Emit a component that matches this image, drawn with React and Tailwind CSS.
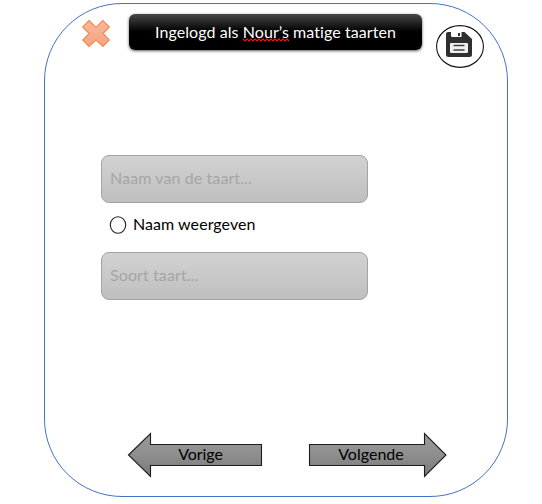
function CloseIcon() {
  return (
    <svg className="block h-7 w-7" viewBox="0 0 28 28">
      <defs>
        <linearGradient id="close" x1="0" y1="0" x2="0" y2="1">
          <stop offset="0" stopColor="#f7b89d" />
          <stop offset="1" stopColor="#f5a482" />
        </linearGradient>
      </defs>
      <path
        d="M7 .5 14 7.3 20.9.5 27.3 7.1 21 13.5 27.3 20 20.9 26.4 14 19.8 7 26.4.7 20 7.2 13.5.7 7.1Z"
        fill="url(#close)"
        stroke="#f08a45"
        strokeWidth="1.1"
      />
    </svg>
  );
}

function SaveIcon() {
  return (
    <svg className="block h-[43px] w-[48px]" viewBox="0 0 48 43">
      <ellipse cx="24" cy="21.5" rx="23.4" ry="20.9" fill="#fff" stroke="#111" strokeWidth="1.1" />
      <path d="M12 7h16.5L36 14v15.5Q36 32 33.500 32h-21Q10 32 10 29.500V9q0-2 2-2Z" fill="#303030" />
      <path d="M15 6.500h10.500v5.500h-9q-1.500 0-1.500-1.500Z" fill="#fff" />
      <path d="M22 8h2v3h-2Z" fill="#303030" />
      <rect x="14" y="18" width="18" height="10" rx="1" fill="#f0f0f0" />
      <path d="M17.500 20.500h11M17.500 25h11" stroke="#404040" strokeWidth="1.300" />
    </svg>
  );
}

function ArrowButton({ label, direction }) {
  const left = direction === "left";
  const id = left ? "arrowLeft" : "arrowRight";
  return (
    <button
      className={
        left
          ? "grid h-[46px] w-[136px] place-items-center"
          : "grid h-[46px] w-[139px] place-items-center"
      }
    >
      <svg
        className="col-start-1 row-start-1 block h-full w-full"
        viewBox={left ? "0 0 136 46" : "0 0 139 46"}
      >
        <defs>
          <linearGradient id={id} x1="0" y1="0" x2="0" y2="1">
            <stop offset="0" stopColor="#9b9b9b" />
            <stop offset="0.5" stopColor="#8e8e8e" />
            <stop offset="1" stopColor="#797979" />
          </linearGradient>
        </defs>
        <path
          d={
            left
              ? "M1.500 23 23.500 1.500V12.500H134.500V33.500H23.500V44.500Z"
              : "M1.500 12.500H116.500V1.500L138 23 116.500 44.500V33.500H1.500Z"
          }
          fill={`url(#${id})`}
          stroke="#1c1c1c"
          strokeWidth="1.100"
        />
      </svg>
      <span
        className={
          left
            ? "col-start-1 row-start-1 mb-[2px] ml-[11px] text-[16px] leading-5 tracking-[-0.05px]"
            : "col-start-1 row-start-1 mr-[13px] mb-[2px] text-[16px] leading-5 tracking-[0.02px]"
        }
      >
        {label}
      </span>
    </button>
  );
}

function Field({ placeholder }) {
  return (
    <div className="flex h-[48px] w-[267px] items-center rounded-[8px] border border-[#a3a3a3] bg-linear-to-b from-[#d2d2d2] to-[#bfbfbf] px-2 pb-[3px] text-[16px] tracking-[0.1px] text-[#a5a5a5]">
      {placeholder}
    </div>
  );
}

function MisspelledWord({ children }) {
  return (
    <span className="relative inline-block">
      {children}
      <svg className="absolute bottom-[2px] left-0 block h-[4px] w-full" aria-hidden="true">
        <defs>
          <pattern id="squiggle" width="4" height="4" patternUnits="userSpaceOnUse">
            <path d="M-1 0 0 1 2 3 4 1 5 0" fill="none" stroke="#f01818" strokeWidth="1.1" />
          </pattern>
        </defs>
        <rect width="100%" height="4" fill="url(#squiggle)" />
      </svg>
    </span>
  );
}

export default function App() {
  return (
    <div className="h-[504px] w-[542px] overflow-hidden bg-white pt-[3px] pl-[44px] font-['Lato',sans-serif] text-black [font-variant-ligatures:none]">
      <main className="flex h-[494px] w-[464px] flex-col rounded-[78px] border border-[#4472c4]">
        <header className="flex items-start pl-[37px]">
          <button className="mt-4">
            <CloseIcon />
          </button>
          <h1 className="mt-[10px] ml-[19px] h-[36px] w-[293px] rounded-[6px] bg-[linear-gradient(#484848_0%,#101010_38%,#000_50%)] text-center text-[16px] leading-[36px] tracking-[0.07px] text-white shadow-[0_1px_3px_rgba(0,0,0,0.65)]">
            <span className="inline-block leading-[24px]">
              Ingelogd als <MisspelledWord>Nour’s</MisspelledWord> matige taarten
            </span>
          </h1>
          <button className="mt-[21px] ml-[14px]">
            <SaveIcon />
          </button>
        </header>
        <section className="mt-[87px] pl-[56px]">
          <Field placeholder="Naam van de taart..." />
          <label className="flex h-[49px] items-center pb-[6px] pl-2">
            <svg className="block h-[18px] w-[18px]" viewBox="0 0 18 18">
              <ellipse cx="9" cy="9" rx="7.700" ry="8.200" fill="#fff" stroke="#222" strokeWidth="1.100" />
            </svg>
            <span className="mb-[2px] ml-[6px] text-[16px] tracking-[0.06px]">Naam weergeven</span>
          </label>
          <Field placeholder="Soort taart..." />
        </section>
        <nav className="mt-auto mb-[18px] flex gap-[45px] pl-[82px]">
          <ArrowButton label="Vorige" direction="left" />
          <ArrowButton label="Volgende" direction="right" />
        </nav>
      </main>
    </div>
  );
}
